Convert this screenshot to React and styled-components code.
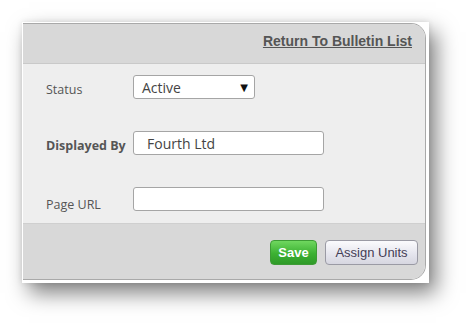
import React from 'react';
import styled, { createGlobalStyle } from 'styled-components';

const GlobalStyle = createGlobalStyle`
  html, body {
    margin: 0;
    background: #fff;
    font-family: 'Open Sans', 'Noto Sans', sans-serif;
  }
`;

const Page = styled.div`
  min-height: 326px;
  padding: 22px 0 0 22px;
  box-sizing: border-box;
`;

const Frame = styled.div`
  width: 407px;
  height: 261px;
  box-sizing: border-box;
  padding: 1px 3px 3px 1px;
  background: #fff;
  box-shadow: 7px 10px 20px rgba(0, 0, 0, 0.5), 0 0 6px rgba(0, 0, 0, 0.1);
`;

const Panel = styled.div`
  height: 100%;
  box-sizing: border-box;
  display: flex;
  flex-direction: column;
  border: 1px solid #a9a9a9;
  border-left: none;
  border-radius: 0 15px 15px 0;
  overflow: hidden;
`;

const Header = styled.div`
  height: 40px;
  flex: none;
  display: flex;
  justify-content: flex-end;
  align-items: flex-start;
  padding: 9px 13px 0 0;
  box-sizing: border-box;
  background: #d8d8d8;
  border-bottom: 1px solid #c9c9c9;
`;

const BackLink = styled.a`
  font-family: 'Liberation Sans', Arial, sans-serif;
  font-size: 14px;
  font-weight: bold;
  color: #555;
  text-decoration: underline;
  cursor: pointer;
`;

const Body = styled.div`
  flex: 1;
  background: #eeeeee;
  padding: 11px 0 0 23px;
  display: grid;
  grid-template-columns: 87px auto;
  grid-auto-rows: 24px;
  row-gap: 32px;
  align-items: center;
`;

const Label = styled.label`
  font-size: 12.5px;
  color: #555;
  font-weight: ${(p) => (p.$bold ? 'bold' : 'normal')};
  padding-top: ${(p) => p.$drop || 0}px;
`;

const Select = styled.div`
  width: 122px;
  height: 24px;
  box-sizing: border-box;
  border: 1px solid #a5a5a5;
  border-radius: 3px;
  background: #fff;
  display: flex;
  align-items: center;
  justify-content: space-between;
  padding: 0 6px 0 8px;
  font-size: 14px;
  color: #444;
`;

const Arrow = styled.span`
  font-family: 'DejaVu Sans', sans-serif;
  font-size: 10px;
  color: #111;
`;

const Input = styled.input`
  width: 191px;
  height: 24px;
  box-sizing: border-box;
  border: 1px solid #a5a5a5;
  border-radius: 3px;
  background: #fff;
  padding: 0 13px;
  font-family: 'Open Sans', 'Noto Sans', sans-serif;
  font-size: 14px;
  color: #444;
  outline: none;
`;

const Footer = styled.div`
  height: 56px;
  flex: none;
  display: flex;
  justify-content: flex-end;
  align-items: flex-start;
  gap: 8px;
  padding: 16px 7px 0 0;
  box-sizing: border-box;
  background: #d8d8d8;
  border-top: 1px solid #cfcfcf;
`;

const Button = styled.button`
  height: 25px;
  box-sizing: border-box;
  border-radius: 4px;
  font-family: 'Liberation Sans', Arial, sans-serif;
  font-size: 13px;
  padding: 0 6px;
  cursor: pointer;
  border: 1px solid ${(p) => (p.$primary ? '#3d9b35' : '#9a9aa4')};
  color: ${(p) => (p.$primary ? '#fff' : '#443d55')};
  font-weight: ${(p) => (p.$primary ? 'bold' : 'normal')};
  background: ${(p) =>
    p.$primary
      ? 'linear-gradient(#6fd75f, #3cb132 55%, #2f9a28)'
      : 'linear-gradient(#fbfbfd, #e6e6ee 55%, #d6d6e0)'};
`;

export default function App() {
  return (
    <Page>
      <GlobalStyle />
      <Frame>
        <Panel>
          <Header>
            <BackLink>Return To Bulletin List</BackLink>
          </Header>
          <Body>
            <Label $drop={5}>Status</Label>
            <Select>
              <span>Active</span>
              <Arrow>▼</Arrow>
            </Select>
            <Label $bold $drop={4}>Displayed By</Label>
            <Input defaultValue="Fourth Ltd" />
            <Label $drop={11}>Page URL</Label>
            <Input />
          </Body>
          <Footer>
            <Button $primary style={{ width: 47 }}>Save</Button>
            <Button style={{ width: 93 }}>Assign Units</Button>
          </Footer>
        </Panel>
      </Frame>
    </Page>
  );
}
